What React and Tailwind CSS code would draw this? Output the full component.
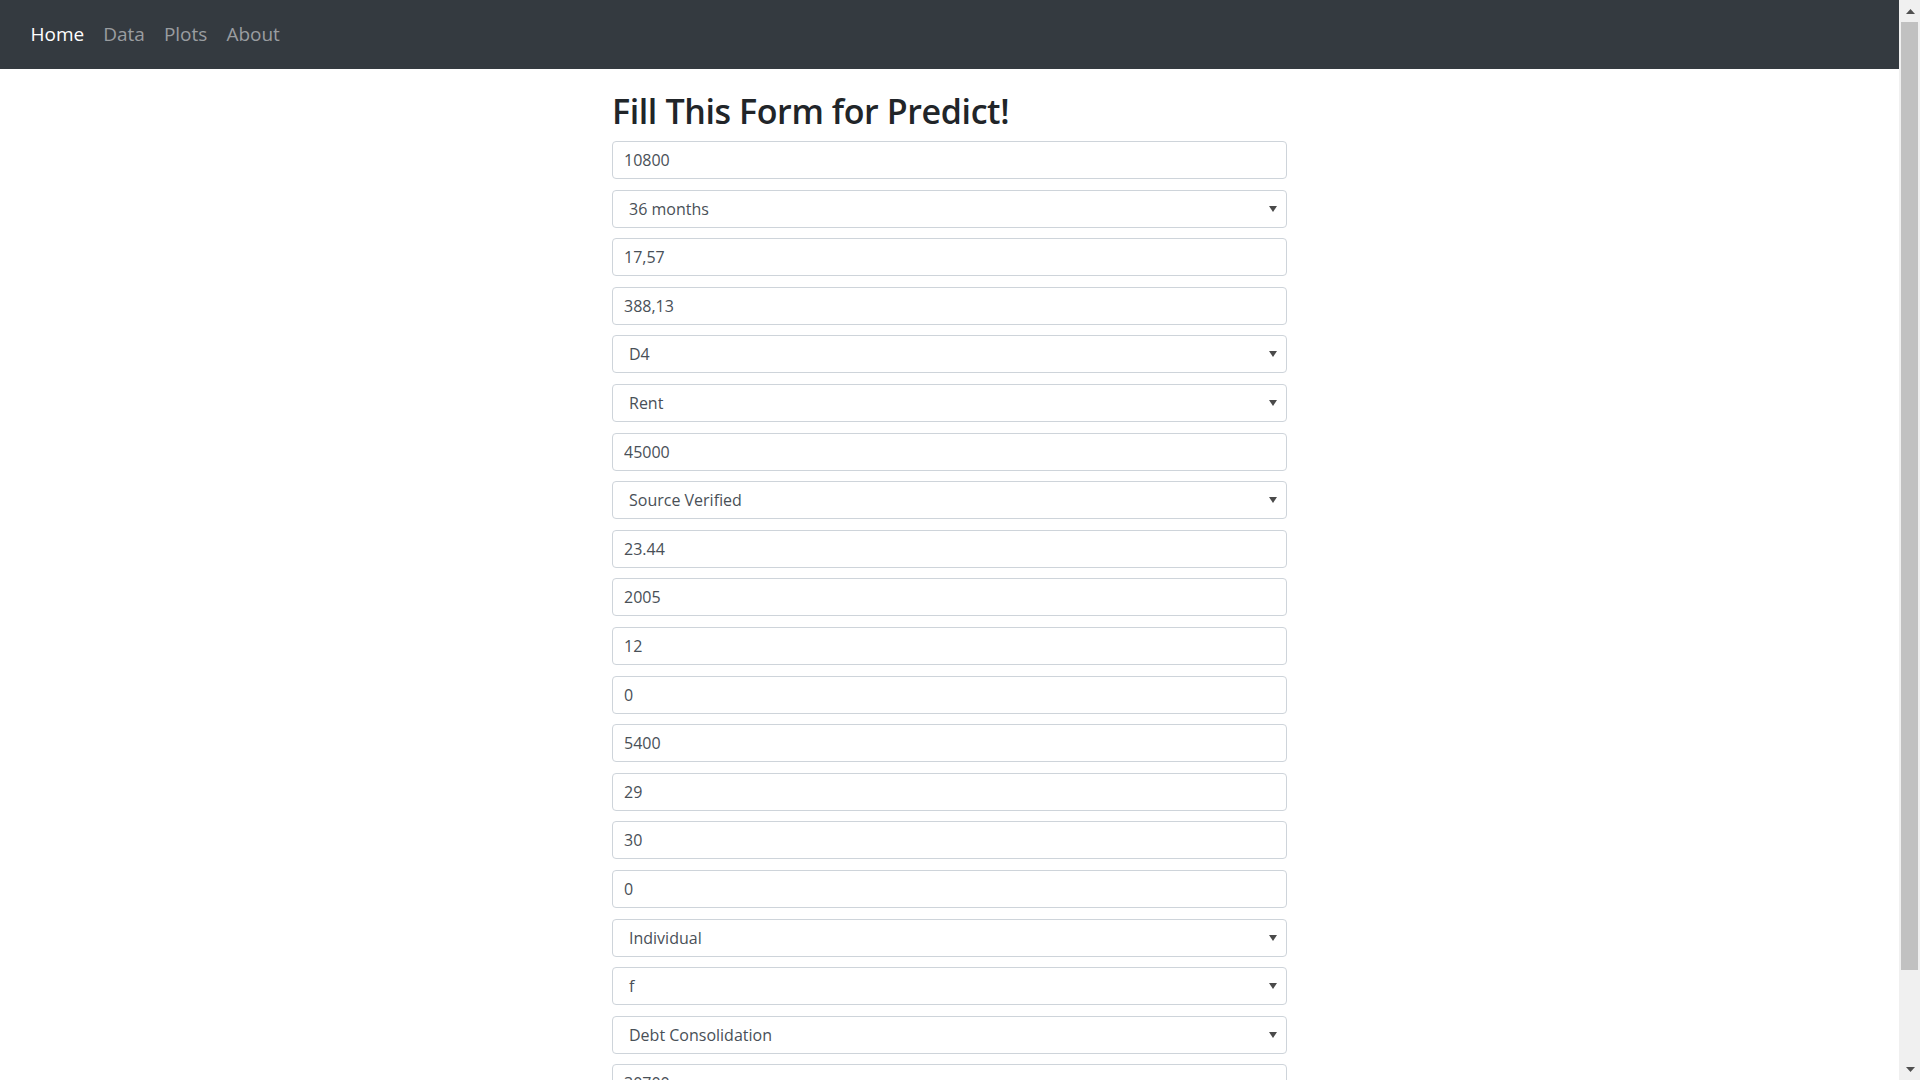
import React from "react";

const links = [
  { name: "Home", active: true },
  { name: "Data" },
  { name: "Plots" },
  { name: "About" },
];

const fields = [
  { value: "10800" },
  { value: "36 months", select: true },
  { value: "17,57" },
  { value: "388,13" },
  { value: "D4", select: true },
  { value: "Rent", select: true },
  { value: "45000" },
  { value: "Source Verified", select: true },
  { value: "23.44" },
  { value: "2005" },
  { value: "12" },
  { value: "0" },
  { value: "5400" },
  { value: "29" },
  { value: "30" },
  { value: "0" },
  { value: "Individual", select: true },
  { value: "f", select: true },
  { value: "Debt Consolidation", select: true },
  { value: "30700" },
];

const Field = ({ value, select }) => {
  if (select) {
    return (
      <div className="flex h-[38px] shrink-0 items-center justify-between rounded border border-[#ced4da] bg-white pl-[16px] pr-[9px] text-[16px] text-[#495057]">
        <span>{value}</span>
        <svg width="8" height="6" viewBox="0 0 8 6" className="text-[#4a4a4a]">
          <path d="M0 0H8L4 6Z" fill="currentColor" />
        </svg>
      </div>
    );
  }
  return (
    <input
      readOnly
      value={value}
      className="h-[38px] w-full shrink-0 rounded border border-[#ced4da] bg-white px-[11px] text-[16px] text-[#495057] outline-none"
    />
  );
};

export default function App() {
  return (
    <div
      className="flex h-[1080px] w-[1920px] overflow-hidden bg-white"
      style={{ fontFamily: '"Open Sans", "Noto Sans", sans-serif' }}
    >
      <div className="flex w-[1899px] flex-col">
        {/* Navbar */}
        <nav className="flex h-[69px] shrink-0 items-center bg-[#343a40] pl-[21px]">
          {links.map((l) => (
            <a
              key={l.name}
              className={
                "px-[9.5px] text-[19px] " +
                (l.active ? "text-white" : "text-[#9a9da0]")
              }
            >
              {l.name}
            </a>
          ))}
        </nav>

        {/* Form */}
        <main className="mx-auto w-[675px] pt-[20px]">
          <h2 className="mb-[8px] text-[34px] font-semibold leading-[44px] tracking-[-0.4px] text-[#212529]">
            Fill This Form for Predict!
          </h2>
          <div className="flex flex-col gap-[10.6px]">
            {fields.map((f, i) => (
              <Field key={i} {...f} />
            ))}
          </div>
        </main>
      </div>

      {/* Scrollbar */}
      <div className="flex w-[21px] shrink-0 flex-col bg-[#f0f0f0]">
        <div className="flex h-[22px] items-center justify-center pl-[1px]">
          <svg width="9" height="5" viewBox="0 0 9 5">
            <path d="M0 5L4.5 0L9 5Z" fill="#505050" />
          </svg>
        </div>
        <div className="ml-[2px] h-[948px] w-[17px] bg-[#c1c1c1]" />
        <div className="flex-1" />
        <div className="flex h-[22px] items-center justify-center pl-[1px]">
          <svg width="9" height="5" viewBox="0 0 9 5">
            <path d="M0 0L4.5 5L9 0Z" fill="#505050" />
          </svg>
        </div>
      </div>
    </div>
  );
}
